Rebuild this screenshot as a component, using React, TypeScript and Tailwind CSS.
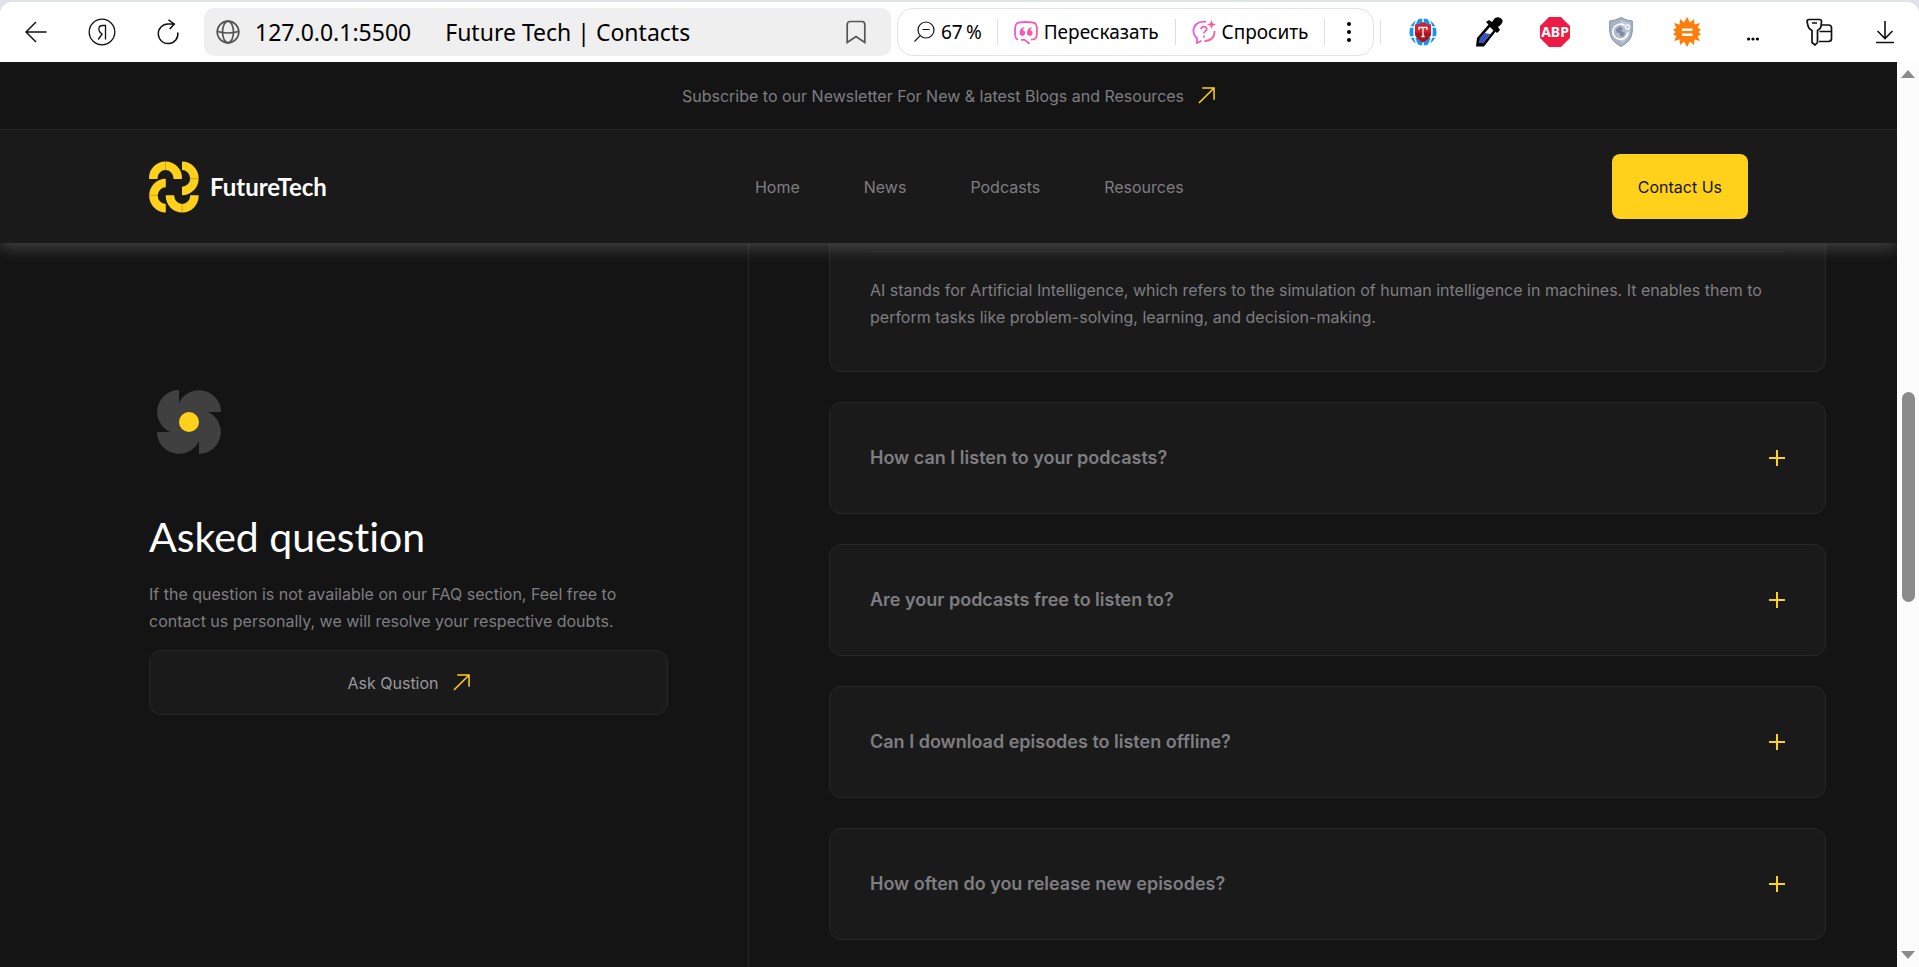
import { useState } from "react";
import type { ReactNode } from "react";

function ArrowUpRight() {
  return (
    <svg width="17" height="17" viewBox="0 0 18 18" fill="none" stroke="#ffd11a" strokeWidth="1.6" aria-hidden="true">
      <path d="M1 17 16.5 1.5M4.500 1H17V13.500" />
    </svg>
  );
}

function BrandMark() {
  return (
    <svg width="50" height="52" viewBox="0 0 50 52" fill="none" stroke="#ffd11a" strokeWidth="8.500" aria-hidden="true">
      <path d="M4.300 18v-1a12.200 12.200 0 0 1 24.400 0v1" />
      <path d="M33 4.800a12.200 12.400 0 0 1 0 25.200" />
      <path d="M45.400 34.300v.7a12.200 12.200 0 0 1-24.400 0v-.7" />
      <path d="M16.800 47.200a12.200 12.400 0 0 1 0-25.200" />
      <path d="M16.500 0v9M41 17.700h9M33.200 43v9M0 34.300h9" stroke="#a58812" strokeWidth=".6" />
    </svg>
  );
}

function Pinwheel() {
  return (
    <svg width="64" height="64" viewBox="0 0 64 64" aria-hidden="true">
      <g fill="#404040">
        <path d="M22 0v32H12A22 22 0 0 1 22 0Z" />
        <path d="M22 0A22 22 0 0 0 13 42H32V13H22Z" />
        <path d="M64 22A22 22 0 0 0 22 13V32H51V22Z" />
        <path d="M42 64A22 22 0 0 0 51 22H32V51H42Z" />
        <path d="M0 42A22 22 0 0 0 42 51V32H13V42Z" />
      </g>
      <circle cx="32" cy="32" r="10" fill="#ffd11a" />
    </svg>
  );
}

function IconButton({ label, children }: { label: string; children: ReactNode }) {
  return (
    <button type="button" aria-label={label} className="flex size-8 shrink-0 items-center justify-center">
      {children}
    </button>
  );
}

function BrowserBar() {
  return (
    <div className="bg-[#dfe3e8] pt-0.5">
      <div className="flex h-[60px] items-center rounded-t-xl bg-white font-['Noto_Sans',sans-serif] text-black">
        <div className="flex items-center gap-[34px] px-5">
          <IconButton label="Back">
            <svg width="22" height="22" viewBox="0 0 22 22" fill="none" stroke="#111" strokeWidth="1.5">
              <path d="M21.500 11H1M11 1 1 11l10 10" />
            </svg>
          </IconButton>
          <IconButton label="Home">
            <svg width="28" height="28" viewBox="0 0 28 28" fill="none" stroke="#111" strokeWidth="1.300">
              <circle cx="14" cy="14" r="12.800" />
              <path d="M17.500 21.500V7.500h-2.700c-2.600 0-4 1.500-4 3.800 0 1.800.8 2.800 2.300 3.900l1 .8-3.900 5.500" />
            </svg>
          </IconButton>
          <IconButton label="Reload">
            <svg width="24" height="26" viewBox="0 0 24 26" fill="none" stroke="#111" strokeWidth="1.500">
              <path d="M21.800 13.500A9.800 9.800 0 1 1 12 5h6M12.500.800 18.300 5l-4.600 5" />
            </svg>
          </IconButton>
        </div>
        <div className="flex h-12 w-[687px] items-center rounded-[10px] bg-[#efefef] px-[11px]">
          <svg width="26" height="26" viewBox="0 0 26 26" fill="none" stroke="#555" strokeWidth="1.700" aria-hidden="true">
            <circle cx="13" cy="13" r="10.800" />
            <ellipse cx="13" cy="13" rx="5.500" ry="10.800" />
            <path d="M2.500 12.500q10.500 3 21 0" />
          </svg>
          <span className="ml-[14px] text-[23px]">127.0.0.1:5500</span>
          <span className="ml-[34px] flex-1 text-[23px]">Future Tech | Contacts</span>
          <IconButton label="Bookmark">
            <svg width="20" height="24" viewBox="0 0 20 24" fill="none" stroke="#555" strokeWidth="1.700">
              <path d="M1.200 22.500V4.500a3 3 0 0 1 3-3h11.600a3 3 0 0 1 3 3v18L10 16.500Z" />
            </svg>
          </IconButton>
          <span className="w-2" />
        </div>
        <div className="ml-1.5 flex h-12 items-center rounded-2xl border border-[#e2e2e2] text-[19px]">
          <button type="button" className="flex items-center gap-1.5 pl-4 pr-[15px]">
            <svg width="21" height="22" viewBox="0 0 21 22" fill="none" stroke="#111" strokeWidth="1.200" aria-hidden="true">
              <circle cx="12" cy="9" r="8" />
              <path d="M6.200 14.600.5 20.500M8.500 8.500h7" />
            </svg>
            67&thinsp;%
          </button>
          <span className="h-[26px] w-px bg-[#dedede]" />
          <button type="button" className="flex items-center gap-1.5 px-4">
            <svg width="24" height="24" viewBox="0 0 24 24" fill="none" stroke="url(#pink)" strokeWidth="1.800" aria-hidden="true">
              <defs>
                <linearGradient id="pink" x1="0" x2="24" y1="0" y2="0" gradientUnits="userSpaceOnUse">
                  <stop stopColor="#e85be0" />
                  <stop offset="1" stopColor="#ff5c8a" />
                </linearGradient>
              </defs>
              <path d="M4 19.500C1.800 19 1 17.500 1 11c0-8 1-9 11-9s11 1 11 9c0 7-1 8.500-6 8.700M7 19.800h3.500l5 4" />
              <path d="M10.500 7C7.200 7.500 5.500 10 5.500 13a2.800 2.800 0 1 0 3.200-2.700L10.500 7ZM18 7c-3.300.5-5 3-5 6a2.800 2.800 0 1 0 3.200-2.700L18 7Z" fill="url(#pink)" stroke="none" />
            </svg>
            Пересказать
          </button>
          <span className="h-[26px] w-px bg-[#dedede]" />
          <button type="button" className="flex items-center gap-1.5 px-4">
            <svg width="24" height="24" viewBox="0 0 24 24" fill="none" stroke="url(#pink)" strokeWidth="1.800" aria-hidden="true">
              <path d="M14 1.800C6 .500 1 5.500 1.500 12c.2 2.500 1.500 4.500 3.500 6.200V23l4.500-2.300M22.500 11c.5 6-3.500 10-10 10" />
              <path d="M9 9.200c.2-3.800 6.300-3.300 5.700.1-.4 2-2.700 1.900-2.700 4.200M12 15.500v2" />
              <path d="m19.500 0 1.200 3.300L24 4.500l-3.300 1.200L19.500 9l-1.200-3.300L15 4.500l3.300-1.200Z" fill="url(#pink)" stroke="none" />
            </svg>
            Спросить
          </button>
          <span className="h-[26px] w-px bg-[#dedede]" />
          <button type="button" aria-label="More actions" className="flex w-12 justify-center">
            <svg width="4" height="20" viewBox="0 0 4 20">
              <circle cx="2" cy="2" r="2" />
              <circle cx="2" cy="10" r="2" />
              <circle cx="2" cy="18" r="2" />
            </svg>
          </button>
        </div>
        <span className="ml-1.5 h-6 w-px bg-[#dedede]" />
        <div className="ml-auto flex items-center gap-[34px] pr-[18px]">
          <IconButton label="Translator">
            <svg width="28" height="28" viewBox="0 0 28 28">
              <circle cx="14" cy="14" r="13.500" fill="#1296ee" />
              <path d="M14 0v28M0 9h28M0 19h28M9 0Q1 14 9 28M19 0q8 14 0 28" fill="none" stroke="#fff" strokeWidth="1.500" />
              <path d="M14 4q4 2.500 8 2.500v8q0 6-8 10-8-4-8-10v-8q4 0 8-2.500Z" fill="#d3222f" />
              <path d="M14 14.500h8q0 6-8 10-8-4-8-10Z" fill="#ab1520" />
              <path d="M10 12V9.500h8V12M14 9.500v9M12.300 18.500h3.400" stroke="#fff" strokeWidth="1.300" fill="none" />
            </svg>
          </IconButton>
          <IconButton label="Colour picker">
            <svg width="28" height="30" viewBox="0 0 28 30">
              <path d="m1 29.500 1-8.500L14 7l7 7L9 29.500Z" fill="#000" />
              <path d="m4.500 26 .5-4.500L15 10l3.500 3.500L8 26Z" fill="#fff" />
              <path d="m4.500 26 .5-4.500L9.500 16l6 1L8 26Z" fill="#3951c4" />
              <path d="m11 5 3-2 3 2 3-4q5-2 7.500 2 .5 4-4.500 7l2 3-3 3Z" fill="#000" />
            </svg>
          </IconButton>
          <IconButton label="Ad blocker">
            <svg width="30" height="30" viewBox="0 0 30 30">
              <path d="M9 0h12l9 9v12l-9 9H9l-9-9V9Z" fill="#ed1c45" />
              <text x="15" y="20" textAnchor="middle" fontSize="14" fontWeight="700" fill="#fff" fontFamily="Noto Sans, sans-serif">
                ABP
              </text>
            </svg>
          </IconButton>
          <IconButton label="Protection">
            <svg width="24" height="30" viewBox="0 0 24 30">
              <path d="M12 .500Q17 3.500 23.300 4v10Q23 24 12 29.500 1 24 .7 14V4Q7 3.500 12 .500Z" fill="#a9b3c6" stroke="#8792a8" />
              <path d="M12 3Q16 5.500 21 6v8q0 8-9 12.500Z" fill="#c1c8d6" />
              <circle cx="11.500" cy="14.500" r="6" fill="#b4bdce" />
              <path d="M7 12.500 11 9l3 3-2 2 4 2-2 4-3-1-.5-3-3-.5Z" fill="#7d8ba5" />
              <path d="M15.500 8.300a7.600 7.600 0 1 0 3.500 7" fill="none" stroke="#fff" strokeWidth="1.700" />
              <circle cx="18.500" cy="10" r="2.200" fill="none" stroke="#fff" strokeWidth="1.200" />
            </svg>
          </IconButton>
          <IconButton label="Savings">
            <svg width="28" height="30" viewBox="0 0 28 30">
              <path d="m14 0 3 5.500L21 2l.5 5.500L27 6l-2.500 5 3.500 1.500L25.500 15l2.500 2.500-3.500 1.500L27 24l-5.500-1.500L21 28l-4-3.500L14 30l-3-5.500L7 28l-.5-5.500L1 24l2.500-5L0 17.500 2.500 15 0 12.500 3.500 11 1 6l5.500 1.500L7 2l4 3.500Z" fill="#ff7d0a" />
              <path d="M9 12.700h10.500M9 17.700h10.500" stroke="#fff" strokeWidth="2.400" />
            </svg>
          </IconButton>
          <IconButton label="More extensions">
            <svg width="12" height="18" viewBox="0 0 12 18">
              <circle cx="1.600" cy="16" r="1.600" />
              <circle cx="6" cy="16" r="1.600" />
              <circle cx="10.400" cy="16" r="1.600" />
            </svg>
          </IconButton>
          <IconButton label="Passwords">
            <svg width="27" height="28" viewBox="0 0 27 28" fill="none" stroke="#111" strokeWidth="1.700">
              <path d="M3 1.500h10.500a2 2 0 0 1 2 2L15 8.500q-.3 2-3.500 4V24.500L9 27l-3-2.500V12.500Q2.500 10.500 2.200 8.500L1 3.500a2 2 0 0 1 2-2ZM6 5h5" />
              <path d="M16 7h6.500a3 3 0 0 1 3 3v10.500a3 3 0 0 1-3 3H13M13.500 13.500h12" />
            </svg>
          </IconButton>
          <IconButton label="Downloads">
            <svg width="18" height="24" viewBox="0 0 18 24" fill="none" stroke="#111" strokeWidth="1.600">
              <path d="M9 1v17M1.500 11 9 18.500 16.500 11M0 22.500h18" />
            </svg>
          </IconButton>
        </div>
      </div>
    </div>
  );
}

function SiteHeader() {
  return (
    <>
      <a
        href="#newsletter"
        className="relative z-20 flex h-[68px] shrink-0 items-center justify-center gap-[14px] border-b border-[#262626] bg-[#141414] text-base text-[#7e7e81]"
      >
        Subscribe to our Newsletter For New &amp; latest Blogs and Resources
        <ArrowUpRight />
      </a>
      <header className="relative z-10 flex h-[113px] shrink-0 items-center justify-between bg-[#1a1a1a] px-[149px] shadow-[0_5px_15px_rgb(255_255_255/0.2)]">
        <a href="#home" className="flex items-center gap-[11px] font-['Lato',sans-serif] text-2xl font-bold text-white">
          <BrandMark />
          FutureTech
        </a>
        <nav className="flex gap-16 text-base text-[#7e7e81]">
          <a href="#home">Home</a>
          <a href="#news">News</a>
          <a href="#podcasts">Podcasts</a>
          <a href="#resources">Resources</a>
        </nav>
        <button type="button" className="h-[65px] rounded-lg bg-[#ffd11a] px-[26px] text-base text-[#141414]">
          Contact Us
        </button>
      </header>
    </>
  );
}

const questions = [
  "How can I listen to your podcasts?",
  "Are your podcasts free to listen to?",
  "Can I download episodes to listen offline?",
  "How often do you release new episodes?",
];

function Question({ title }: { title: string }) {
  const [open, setOpen] = useState(false);
  return (
    <button
      type="button"
      aria-expanded={open}
      onClick={() => setOpen(!open)}
      className="flex h-28 shrink-0 items-center justify-between rounded-xl border border-[#262626] bg-[#1a1a1a] px-10 text-left text-lg font-semibold text-[#7e7e81]"
    >
      {title}
      <svg width="16" height="16" viewBox="0 0 16 16" stroke="#ffd11a" strokeWidth="2" aria-hidden="true">
        <path d={open ? "M0 8h16" : "M0 8h16M8 0v16"} />
      </svg>
    </button>
  );
}

function Faq() {
  return (
    <main className="flex min-h-0 flex-1 text-base text-[#7e7e81]">
      <section className="flex w-[749px] shrink-0 flex-col border-r border-[#262626] pl-[149px] pr-20 pt-[147px]">
        <div className="pl-2">
          <Pinwheel />
        </div>
        <h2 className="mt-[55px] font-['Lato',sans-serif] text-[41px] leading-[56px] text-white [font-variant-ligatures:none]">
          Asked question
        </h2>
        <p className="mt-4 w-[480px] leading-[27px]">
          If the question is not available on our FAQ section, Feel free to contact us personally, we will resolve your
          respective doubts.
        </p>
        <button
          type="button"
          className="mt-[15px] flex h-[65px] items-center justify-center gap-[14px] rounded-xl border border-[#262626] bg-[#1a1a1a] text-[#98989a]"
        >
          Ask Qustion
          <ArrowUpRight />
        </button>
      </section>
      <section className="flex flex-1 flex-col gap-[30px] overflow-hidden pl-20 pr-[71px]">
        <article className="shrink-0 rounded-b-xl border border-t-0 border-[#262626] bg-[#1a1a1a] px-10 pb-10 pt-2">
          <p className="border-t border-[#262626] pt-[25px] leading-[27px]">
            AI stands for Artificial Intelligence, which refers to the simulation of human intelligence in machines. It
            enables them to perform tasks like problem-solving, learning, and decision-making.
          </p>
        </article>
        {questions.map((q) => (
          <Question key={q} title={q} />
        ))}
      </section>
    </main>
  );
}

function Scrollbar() {
  return (
    <div className="flex w-[22px] shrink-0 flex-col items-center justify-between bg-[#fcfcfc] py-2" aria-hidden="true">
      <svg width="14" height="8" viewBox="0 0 14 8" fill="#8b8b8b">
        <path d="m7 0 7 8H0Z" />
      </svg>
      <div className="flex w-full flex-1 flex-col items-center">
        <span className="basis-[36%]" />
        <span className="w-[13px] basis-[24%] rounded-full bg-[#8b8b8b]" />
      </div>
      <svg width="14" height="8" viewBox="0 0 14 8" fill="#8b8b8b">
        <path d="m7 8 7-8H0Z" />
      </svg>
    </div>
  );
}

export default function App() {
  return (
    <div className="flex h-screen flex-col overflow-hidden bg-[#141414]">
      <BrowserBar />
      <div className="flex min-h-0 flex-1">
        <div className="flex min-w-0 flex-1 flex-col overflow-hidden font-['Inter',sans-serif]">
          <SiteHeader />
          <Faq />
        </div>
        <Scrollbar />
      </div>
    </div>
  );
}
